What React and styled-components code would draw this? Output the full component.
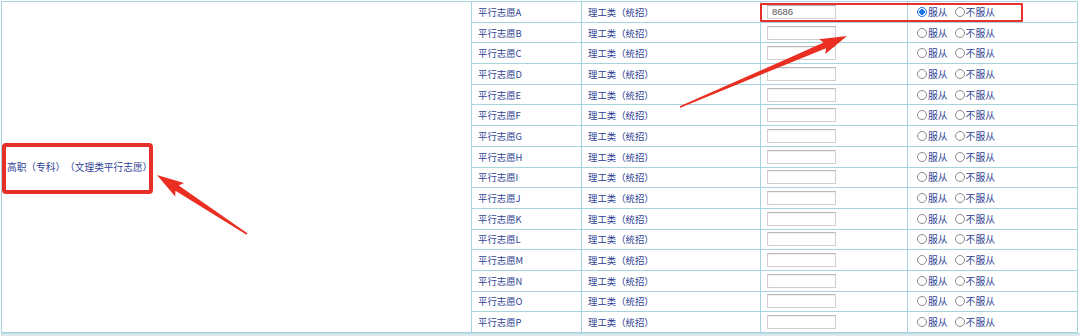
import React from 'react';
import styled, { createGlobalStyle } from 'styled-components';

const GlobalStyle = createGlobalStyle`
  html, body {
    margin: 0;
    padding: 0;
    background: #fff;
  }
  body {
    font-family: "Noto Sans CJK SC", "Noto Sans", sans-serif;
    text-spacing-trim: space-all;
  }
`;

const LINE = '#a7d3df';
const TEXT = '#2f3f94';

const Page = styled.div`
  position: relative;
  width: 1080px;
  height: 336px;
  overflow: hidden;
  padding: 1px 0 0 1px;
  box-sizing: border-box;
`;

const Grid = styled.div`
  display: grid;
  grid-template-columns: 470px 110px 179px 147px 170px;
  grid-template-rows: repeat(16, 20.6875px);
  border-top: 1px solid ${LINE};
  border-left: 1px solid ${LINE};
  width: max-content;
`;

const Cell = styled.div`
  display: flex;
  align-items: center;
  box-sizing: border-box;
  border-right: 1px solid ${LINE};
  border-bottom: 1px solid ${LINE};
  padding-left: ${p => p.$pad || 6}px;
  font-size: 9.4px;
  color: ${TEXT};
  white-space: nowrap;
  overflow: hidden;
  text-spacing-trim: space-all;
`;

const GroupCell = styled(Cell)`
  grid-row: 1 / span 16;
  padding-left: 5px;
  font-size: 9.7px;
`;

const Score = styled.input`
  width: 69px;
  height: 14px;
  box-sizing: border-box;
  border: 1px solid #cfcfcf;
  border-top-color: #b9b9b9;
  box-shadow: inset 0 1px 1px rgba(0, 0, 0, 0.06);
  padding: 0 0 0 4px;
  font-family: "Liberation Sans", sans-serif;
  font-size: 9.5px;
  color: #555;
  outline: none;
  background: #fff;
`;

const Choice = styled.label`
  display: inline-flex;
  align-items: center;
  margin-right: ${p => p.$gap || 0}px;
  color: ${TEXT};
  font-size: 9.8px;
`;

const Dot = styled.span`
  width: 10px;
  height: 10px;
  box-sizing: border-box;
  border-radius: 50%;
  border: 1px solid ${p => (p.$on ? '#1a73e8' : '#8b8b8b')};
  background: ${p => (p.$on ? 'radial-gradient(circle, #1a73e8 0 2.6px, #fff 3px)' : '#fff')};
  margin-right: 1px;
  flex: none;
`;

const Bottom = styled.div`
  height: 4px;
  background: #dde8ee;
  border-top: 1px solid #b9dbe5;
`;

const RedBox = styled.div`
  position: absolute;
  left: ${p => p.$x}px;
  top: ${p => p.$y}px;
  width: ${p => p.$w}px;
  height: ${p => p.$h}px;
  box-sizing: border-box;
  border: ${p => p.$t}px solid #e8302a;
  border-radius: ${p => p.$r}px;
  pointer-events: none;
`;

const Overlay = styled.svg`
  position: absolute;
  left: 0;
  top: 0;
  pointer-events: none;
`;

const letters = 'ABCDEFGHIJKLMNOP'.split('');

function arrowPoints(tx, ty, hx, hy) {
  const dx = hx - tx;
  const dy = hy - ty;
  const len = Math.hypot(dx, dy);
  const ux = dx / len;
  const uy = dy / len;
  const nx = -uy;
  const ny = ux;
  const headLen = 24;
  const headW = 8;
  const neckW = 3;
  const tailW = 0.8;
  const bx = hx - ux * headLen;
  const by = hy - uy * headLen;
  const pts = [
    [tx + nx * tailW, ty + ny * tailW],
    [bx + nx * neckW, by + ny * neckW],
    [bx - ux * 3 + nx * headW, by - uy * 3 + ny * headW],
    [hx, hy],
    [bx - ux * 3 - nx * headW, by - uy * 3 - ny * headW],
    [bx - nx * neckW, by - ny * neckW],
    [tx - nx * tailW, ty - ny * tailW],
  ];
  return pts.map(p => p.map(v => v.toFixed(1)).join(',')).join(' ');
}

export default function App() {
  return (
    <>
      <GlobalStyle />
      <Page>
        <Grid>
          <GroupCell>高职（专科）（文理类平行志愿）</GroupCell>
          {letters.map((l, i) => (
            <React.Fragment key={l}>
              <Cell $pad={6}>平行志愿{l}</Cell>
              <Cell $pad={6}>理工类（统招）</Cell>
              <Cell $pad={6}>
                <Score readOnly value={i === 0 ? '8686' : ''} />
              </Cell>
              <Cell $pad={9}>
                <Choice $gap={7}>
                  <Dot $on={i === 0} />服从
                </Choice>
                <Choice>
                  <Dot />不服从
                </Choice>
              </Cell>
            </React.Fragment>
          ))}
        </Grid>
        <Bottom />

        <RedBox $x={2} $y={143} $w={151} $h={51} $t={4} $r={4} />
        <RedBox $x={760} $y={3} $w={263} $h={19} $t={2} $r={1} />

        <Overlay width="1080" height="336">
          <polygon points={arrowPoints(247, 234, 157, 175)} fill="#ea2f22" />
          <polygon points={arrowPoints(680, 107, 847, 36)} fill="#ea2f22" />
        </Overlay>
      </Page>
    </>
  );
}
